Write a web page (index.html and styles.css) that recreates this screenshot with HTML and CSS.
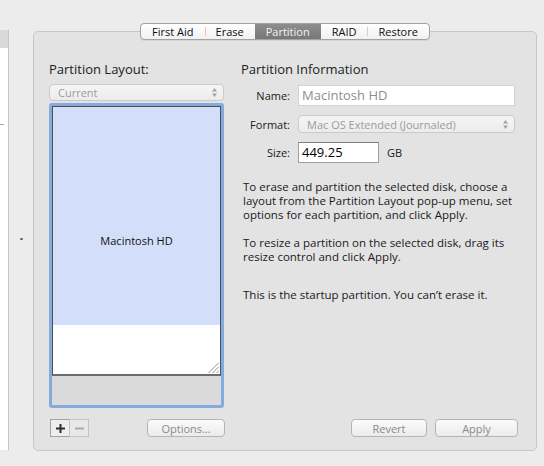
FILE: index.html
```html
<!DOCTYPE html>
<html>
<head>
<meta charset="utf-8">
<link rel="stylesheet" href="styles.css">
</head>
<body>
<div class="window">
  <aside class="sidebar">
    <div class="sidebar-head"></div>
    <div class="sidebar-tick"></div>
  </aside>
  <div class="splitter"><span class="grip"></span></div>
  <main class="main">
    <nav class="tabs">
      <span class="tab">First Aid</span>
      <span class="tab">Erase</span>
      <span class="tab selected">Partition</span>
      <span class="tab">RAID</span>
      <span class="tab">Restore</span>
    </nav>
    <section class="panel">
      <div class="col layout-col">
        <h2 class="title">Partition Layout:</h2>
        <div class="popup current">
          <span>Current</span>
          <svg class="arrows" width="5" height="9" viewBox="0 0 5 9"><path d="M0 3.5 L2.5 0 L5 3.5 Z M0 5.5 L5 5.5 L2.5 9 Z"/></svg>
        </div>
        <div class="map">
          <div class="disk">
            <span>Macintosh HD</span>
            <svg class="resize" width="11" height="11" viewBox="0 0 11 11"><path d="M0.5 11 L11 0.5 M4.5 11 L11 4.5 M8.5 11 L11 8.5"/></svg>
          </div>
          <div class="map-foot"></div>
        </div>
        <div class="footer">
          <div class="addremove">
            <span class="sq"><svg width="9" height="9" viewBox="0 0 9 9"><path d="M0 4.5 H9 M4.5 0 V9" stroke="#2e2e2e" stroke-width="2"/></svg></span>
            <span class="sq off"><svg width="9" height="9" viewBox="0 0 9 9"><path d="M0 4.5 H9" stroke="#a8a8a8" stroke-width="2"/></svg></span>
          </div>
          <span class="btn options">Options…</span>
        </div>
      </div>
      <div class="col info-col">
        <h2 class="title">Partition Information</h2>
        <div class="form">
          <label>Name:</label>
          <div class="field name">Macintosh HD</div>
          <label>Format:</label>
          <div class="popup format">
            <span>Mac OS Extended (Journaled)</span>
            <svg class="arrows" width="5" height="9" viewBox="0 0 5 9"><path d="M0 3.5 L2.5 0 L5 3.5 Z M0 5.5 L5 5.5 L2.5 9 Z"/></svg>
          </div>
          <label>Size:</label>
          <div class="size-row">
            <div class="field size">449.25</div>
            <span class="unit">GB</span>
          </div>
        </div>
        <p class="p1">To erase and partition the selected disk, choose a<br>layout from the Partition Layout pop-up menu, set<br>options for each partition, and click Apply.</p>
        <p class="p2">To resize a partition on the selected disk, drag its<br>resize control and click Apply.</p>
        <p class="p3">This is the startup partition. You can’t erase it.</p>
        <div class="footer actions">
          <span class="btn revert">Revert</span>
          <span class="btn apply">Apply</span>
        </div>
      </div>
    </section>
  </main>
</div>
</body>
</html>
```
FILE: styles.css
```css
* { box-sizing: border-box; }

body {
  margin: 0;
  background: #ececec;
  font-family: "Open Sans", "DejaVu Sans", sans-serif;
  font-size: 11px;
  color: #1a1a1a;
}

.window {
  display: flex;
  width: 544px;
  height: 466px;
}

/* left source list */
.sidebar {
  width: 9px;
  height: 420px;
  margin-top: 30px;
  background: #fff;
  border-right: 1px solid #c4c4c4;
}
.sidebar-head {
  height: 18px;
  background: #d9d9d9;
}
.sidebar-tick {
  width: 4px;
  height: 1px;
  margin-top: 76px;
  background: #a6a6a6;
}

.splitter {
  width: 24px;
  padding-top: 12px;
  display: flex;
  align-items: center;
  justify-content: center;
}
.grip {
  width: 3px;
  height: 2px;
  background: #6a6a6a;
  border-radius: 1px;
}

/* main area */
.main {
  width: 504px;
  padding-top: 23px;
  display: flex;
  flex-direction: column;
  align-items: center;
}

.tabs {
  display: flex;
  height: 17px;
  margin-bottom: -9px;
  position: relative;
  z-index: 1;
  border: 1px solid #a2a2a2;
  border-radius: 4px;
  background: linear-gradient(#ffffff, #f1f1f1);
  overflow: hidden;
  box-shadow: 0 1px 0 rgba(0,0,0,0.06);
}
.tab {
  position: relative;
  padding: 0 11px;
  line-height: 15px;
  color: #0d0d0d;
}
.tab + .tab::before {
  content: "";
  position: absolute;
  left: 0;
  top: 3px;
  bottom: 3px;
  width: 1px;
  background: #d0d0d0;
}
.tab.selected {
  background: linear-gradient(#8d8d8d, #777777);
  color: #f2f2f2;
}
.tab.selected::before,
.tab.selected + .tab::before {
  display: none;
}

.panel {
  width: 504px;
  height: 420px;
  display: flex;
  padding: 29px 18px 13px 15px;
  background: #e3e3e3;
  border: 1px solid #c7c7c7;
  border-radius: 5px;
}

.col {
  display: flex;
  flex-direction: column;
}
.layout-col { width: 176px; }
.info-col {
  flex: 1;
  margin-left: 16px;
}

.title {
  margin: 0;
  font-size: 13px;
  font-weight: normal;
  line-height: 16px;
  color: #222;
}

/* pop-up buttons */
.popup {
  display: flex;
  align-items: center;
  justify-content: space-between;
  height: 17px;
  padding: 0 6px 0 8px;
  border: 1px solid #cacaca;
  border-radius: 4px;
  background: linear-gradient(#f5f5f5, #ececec);
  color: #9c9c9c;
}
.popup.current {
  width: 175px;
  margin-top: 7px;
}
.popup.format {
  height: 18px;
}
.arrows { fill: #a3a3a3; }

/* partition map */
.map {
  width: 175px;
  height: 305px;
  margin-top: 2px;
  display: flex;
  flex-direction: column;
  border: 3px solid #84abdc;
  border-radius: 3px;
  background: #dadada;
}
.disk {
  position: relative;
  height: 270px;
  display: flex;
  align-items: center;
  justify-content: center;
  border: 1px solid #4e4e4e;
  border-bottom: 2px solid #6c6c6c;
  background: linear-gradient(#d3dffa 218px, #ffffff 218px);
  color: #111;
}
.resize {
  position: absolute;
  right: 1px;
  bottom: 1px;
  stroke: #8c8c8c;
  stroke-width: 1;
}
.map-foot { flex: 1; }

/* footers */
.footer {
  display: flex;
  align-items: center;
  height: 18px;
  margin-top: 11px;
}
.layout-col .footer { justify-content: space-between; }
.addremove {
  display: flex;
  margin-left: 1px;
}
.sq {
  width: 20px;
  height: 18px;
  display: flex;
  align-items: center;
  justify-content: center;
  border: 1px solid #a3a3a3;
  background: #eeeeee;
}
.sq.off {
  width: 20px;
  margin-left: -1px;
  border-color: #c4c4c4;
  background: #e8e8e8;
}

.btn {
  display: flex;
  align-items: center;
  justify-content: center;
  height: 18px;
  border: 1px solid #b5b5b5;
  border-radius: 4px;
  background: linear-gradient(#fbfbfb, #ebebeb);
  color: #8a8a8a;
}
.options { width: 78px; }
.actions {
  margin-top: auto;
  justify-content: flex-end;
  gap: 8px;
}
.revert { width: 76px; }
.apply { width: 83px; }

/* form */
.form {
  display: grid;
  grid-template-columns: 49px 217px;
  column-gap: 8px;
  row-gap: 9px;
  align-items: center;
  margin-top: 8px;
}
.form label {
  text-align: right;
  color: #1a1a1a;
}
.field {
  height: 21px;
  padding-left: 3px;
  line-height: 19px;
  font-size: 13px;
  background: #fff;
}
.field.name {
  border: 1px solid #d3d3d3;
  color: #8e8e8e;
}
.size-row {
  display: flex;
  align-items: center;
  gap: 8px;
}
.field.size {
  width: 81px;
  border: 1px solid #a0a0a0;
  border-top-color: #7e7e7e;
  color: #000;
}
.unit { color: #1a1a1a; }

/* description */
.info-col p {
  margin: 0;
  padding-left: 2px;
  font-size: 11.5px;
  line-height: 14px;
  white-space: nowrap;
}
.info-col .p1 { margin-top: 17px; }
.info-col .p2 { margin-top: 14px; }
.info-col .p3 { margin-top: 24px; }
```
